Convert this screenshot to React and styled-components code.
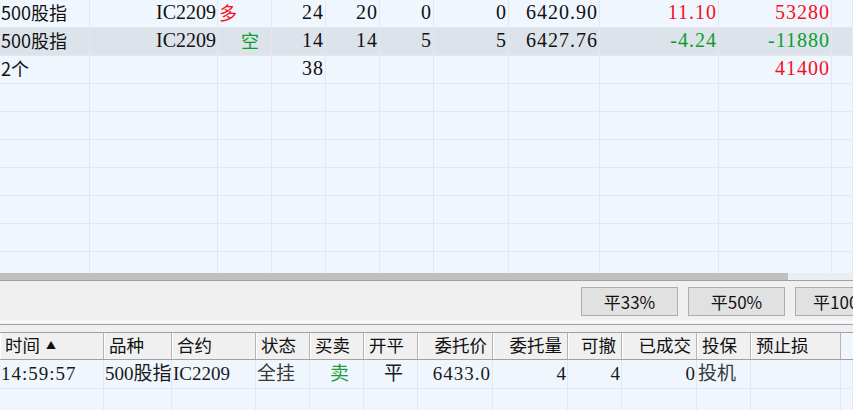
import React from "react";
import styled, { createGlobalStyle } from "styled-components";

const Global = createGlobalStyle`
  html, body { margin: 0; padding: 0; background: #f0f6fe; }
  body { width: 853px; height: 410px; overflow: hidden; }
  #root { width: 853px; height: 410px; overflow: hidden; }
`;

const Page = styled.div`
  display: flex;
  flex-direction: column;
  width: 853px;
  height: 410px;
  overflow: hidden;
`;

const TopGrid = styled.div`
  height: 273px;
  overflow: hidden;
  background: #f0f6fe;
  flex-shrink: 0;
`;

const TopRow = styled.div`
  display: grid;
  grid-template-columns: 90px 128px 54px 54px 54px 54px 75px 91px 119px 113px 1fr;
  height: 28px;
  background: ${(p) => (p.$selected ? "#dde3ea" : "#f0f6fe")};
  box-sizing: border-box;
  border-bottom: 1px solid #e3e8ee;
`;

const Cell = styled.div`
  box-sizing: border-box;
  border-right: 1px solid #e3e8ee;
  height: 27px;
  line-height: 25px;
  overflow: hidden;
  white-space: nowrap;
  text-align: ${(p) => p.$align || "right"};
  padding: ${(p) => (p.$align === "left" ? `0 0 0 ${p.$pl ?? 1}px` : "0 1px 0 0")};
  letter-spacing: ${(p) => (p.$num ? "1px" : "0")};
  font-family: ${(p) =>
    p.$sans
      ? `"Noto Sans CJK SC", "Noto Sans", sans-serif`
      : `"Liberation Serif", "Noto Sans CJK SC", serif`};
  font-size: ${(p) => (p.$sans ? "18px" : "20px")};
  color: ${(p) => (p.$tone === "up" ? "#f5101c" : p.$tone === "down" ? "#0c9e2c" : "#111")};
`;

const HScroll = styled.div`
  height: 7px;
  background: #e9eef4;
  flex-shrink: 0;
  display: flex;
`;

const Thumb = styled.div`
  width: 788px;
  background: #c0c0c0;
`;

const ButtonBar = styled.div`
  flex-shrink: 0;
  height: 42px;
  box-sizing: border-box;
  border-top: 1px solid #a0a0a0;
  border-bottom: 1px solid #ffffff;
  background: #f0f0f0;
  display: flex;
  align-items: center;
  gap: 10px;
  padding-left: 581px;
  overflow: hidden;
`;

const ActionButton = styled.div`
  flex-shrink: 0;
  width: 97px;
  height: 29px;
  box-sizing: border-box;
  border: 1px solid #adadad;
  background: #e1e1e1;
  display: flex;
  align-items: center;
  justify-content: center;
  font-family: "Noto Sans CJK SC", "Noto Sans", sans-serif;
  font-size: 17px;
  color: #111;
`;

const Splitter = styled.div`
  flex-shrink: 0;
  height: 9px;
  box-sizing: border-box;
  background: #f0f0f0;
  border-top: 1px solid #a0a0a0;
  border-bottom: 1px solid #a0a0a0;
  margin-top: 2px;
`;

const BottomGrid = styled.div`
  flex: 1;
  background: #f0f6fe;
  overflow: hidden;
`;

const cols = "104px 68px 84px 54px 54px 54px 75px 75px 54px 75px 54px 90px 1fr";

const HeadRow = styled.div`
  display: grid;
  grid-template-columns: ${cols};
  height: 27px;
  box-sizing: border-box;
  border-bottom: 1px solid #a0a0a0;
`;

const HeadCell = styled.div`
  box-sizing: border-box;
  background: ${(p) => (p.$blank ? "#f0f6fe" : "#f0f0f0")};
  border-right: ${(p) => (p.$blank ? "none" : "1px solid #b4b4b4")};
  box-shadow: ${(p) => (p.$blank ? "none" : "inset 1px 0 0 #ffffff")};
  font-family: "Noto Sans CJK SC", "Noto Sans", sans-serif;
  font-size: 17.5px;
  line-height: 24px;
  color: #111;
  white-space: nowrap;
  overflow: hidden;
  text-align: ${(p) => p.$align || "left"};
  padding: ${(p) => (p.$align === "right" ? "0 5px 0 0" : "0 0 0 5px")};
`;

const SortMark = styled.span`
  font-size: 10px;
  margin-left: 6px;
  vertical-align: 3px;
`;

const DataRow = styled.div`
  display: grid;
  grid-template-columns: ${cols};
  height: 29px;
  box-sizing: border-box;
  border-bottom: 1px solid #e3e8ee;
`;

const DataCell = styled.div`
  box-sizing: border-box;
  border-right: 1px solid #e3e8ee;
  height: 28px;
  line-height: 27px;
  white-space: nowrap;
  font-family: "Liberation Serif", "Noto Sans CJK SC", serif;
  font-size: 19px;
  letter-spacing: ${(p) => (p.$num ? "1px" : "0")};
  color: ${(p) => (p.$tone === "down" ? "#1a9e3a" : p.$tone === "dim" ? "#3a3a3a" : "#1a1a1a")};
  text-align: ${(p) => p.$align || "left"};
  padding: ${(p) =>
    p.$align === "right" ? "0 1px 0 0" : p.$align === "center" ? "0 0 0 6px" : "0 0 0 1px"};
`;

const topRows = [
  {
    cells: ["500股指", "IC2209", "多", "24", "20", "0", "0", "6420.90", "11.10", "53280", ""],
    dir: "up",
  },
  {
    cells: ["500股指", "IC2209", "空", "14", "14", "5", "5", "6427.76", "-4.24", "-11880", ""],
    dir: "down",
    selected: true,
  },
  { cells: ["2个", "", "", "38", "", "", "", "", "", "41400", ""], total: true },
];

function TopTableRow({ row }) {
  const c = row.cells;
  const pnlTone = (v) => (v === "" ? undefined : v.startsWith("-") ? "down" : "up");
  return (
    <TopRow $selected={row.selected}>
      <Cell $align="left" $sans>{c[0]}</Cell>
      <Cell>{c[1]}</Cell>
      <Cell $align="left" $sans $pl={c[2] === "空" ? 23 : 1} $tone={row.dir}>
        {c[2]}
      </Cell>
      <Cell $num>{c[3]}</Cell>
      <Cell $num>{c[4]}</Cell>
      <Cell $num>{c[5]}</Cell>
      <Cell $num>{c[6]}</Cell>
      <Cell $num>{c[7]}</Cell>
      <Cell $num $tone={pnlTone(c[8])}>{c[8]}</Cell>
      <Cell $num $tone={pnlTone(c[9])}>{c[9]}</Cell>
      <Cell>{c[10]}</Cell>
    </TopRow>
  );
}

const emptyTop = Array.from({ length: 7 }, () => ({ cells: Array(11).fill("") }));

const headers = [
  { t: "时间", sort: true },
  { t: "品种" },
  { t: "合约" },
  { t: "状态" },
  { t: "买卖" },
  { t: "开平" },
  { t: "委托价", r: true },
  { t: "委托量", r: true },
  { t: "可撤", r: true },
  { t: "已成交", r: true },
  { t: "投保" },
  { t: "预止损" },
];

export default function App() {
  return (
    <>
      <Global />
      <Page>
        <TopGrid>
          {topRows.map((r, i) => (
            <TopTableRow key={i} row={r} />
          ))}
          {emptyTop.map((r, i) => (
            <TopTableRow key={"e" + i} row={r} />
          ))}
        </TopGrid>
        <HScroll>
          <Thumb />
        </HScroll>
        <ButtonBar>
          <ActionButton>平33%</ActionButton>
          <ActionButton>平50%</ActionButton>
          <ActionButton>平100%</ActionButton>
        </ButtonBar>
        <Splitter />
        <BottomGrid>
          <HeadRow>
            {headers.map((h) => (
              <HeadCell key={h.t} $align={h.r ? "right" : "left"}>
                {h.t}
                {h.sort && <SortMark>▲</SortMark>}
              </HeadCell>
            ))}
            <HeadCell $blank />
          </HeadRow>
          <DataRow>
            <DataCell $num>14:59:57</DataCell>
            <DataCell>500股指</DataCell>
            <DataCell>IC2209</DataCell>
            <DataCell $tone="dim">全挂</DataCell>
            <DataCell $align="center" $tone="down">卖</DataCell>
            <DataCell $align="center">平</DataCell>
            <DataCell $align="right" $num>6433.0</DataCell>
            <DataCell $align="right">4</DataCell>
            <DataCell $align="right">4</DataCell>
            <DataCell $align="right">0</DataCell>
            <DataCell $tone="dim">投机</DataCell>
            <DataCell />
            <DataCell />
          </DataRow>
          <DataRow>
            {Array.from({ length: 13 }, (_, i) => (
              <DataCell key={i} />
            ))}
          </DataRow>
        </BottomGrid>
      </Page>
    </>
  );
}
